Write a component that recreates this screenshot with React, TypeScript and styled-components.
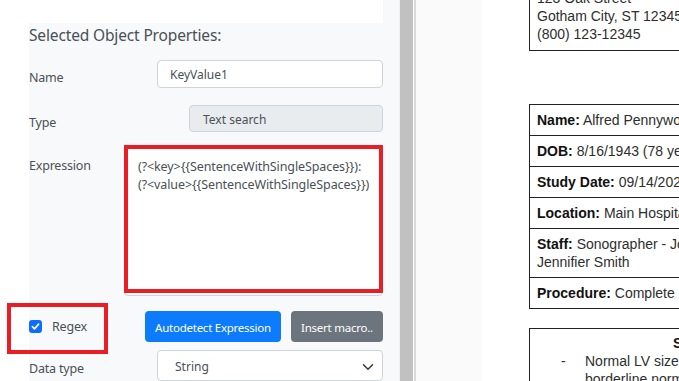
import React from "react"
import styled, { createGlobalStyle } from "styled-components"

const Global = createGlobalStyle`
  html, body {
    margin: 0;
    padding: 0;
    background: #fff;
  }
  * {
    box-sizing: border-box;
  }
`

const S = {
  Screen: styled.div`
    width: 679px;
    height: 381px;
    display: flex;
    overflow: hidden;
    font-family: "Noto Sans", "Open Sans", sans-serif;
  `,
  Left: styled.div`
    width: 400px;
    flex: none;
    padding-left: 29px;
    background: #fff;
    display: flex;
  `,
  Panel: styled.div`
    flex: 1;
    background: #f8f9fa;
    padding-right: 16px;
    border-right: 1px solid #eef0f2;
    display: flex;
    flex-direction: column;
  `,
  TopCard: styled.div`
    height: 24px;
    background: #fff;
  `,
  Heading: styled.div`
    height: 24px;
    line-height: 24px;
    font-size: 15.5px;
    color: #495057;
    letter-spacing: -0.15px;
  `,
  Row: styled.div<{ $mt: number }>`
    display: grid;
    grid-template-columns: 95px 1fr;
    align-items: start;
    margin-top: ${(p) => p.$mt}px;
  `,
  Label: styled.div<{ $pt: number }>`
    font-size: 12.5px;
    letter-spacing: -0.2px;
    color: #495057;
    padding-top: ${(p) => p.$pt}px;
    line-height: 18px;
  `,
  Input: styled.div<{ $indent: number; $disabled?: boolean }>`
    margin-left: ${(p) => p.$indent}px;
    height: ${(p) => (p.$disabled ? 27 : 28)}px;
    border: 1px solid #ced4da;
    border-radius: 4px;
    background: ${(p) => (p.$disabled ? "#e9ecef" : "#fff")};
    padding-left: ${(p) => (p.$disabled ? 13 : 12)}px;
    padding-top: 1px;
    display: flex;
    align-items: center;
    font-size: 12px;
    color: #495057;
  `,
  Select: styled.div`
    margin-left: 33px;
    height: 31px;
    border: 1px solid #ced4da;
    border-radius: 4px;
    background: #fff;
    padding: 2px 8px 0 17px;
    display: flex;
    align-items: center;
    justify-content: space-between;
    font-size: 12px;
    color: #495057;
  `,
  AreaWrap: styled.div`
    position: relative;
    height: 151px;
    border: 1px solid #ced4da;
    border-radius: 4px;
    background: #fff;
    padding: 12px 10px 0 13px;
    font-size: 12.5px;
    line-height: 18px;
    color: #495057;
    white-space: pre;
    letter-spacing: -0.1px;
  `,
  Grip: styled.svg`
    position: absolute;
    right: 1px;
    bottom: 1px;
  `,
  Annotation: styled.div<{ $t: number; $l: number; $w: number; $h: number }>`
    position: absolute;
    top: ${(p) => p.$t}px;
    left: ${(p) => p.$l}px;
    width: ${(p) => p.$w}px;
    height: ${(p) => p.$h}px;
    border: 4.5px solid #ec1c24;
    pointer-events: none;
  `,
  Actions: styled.div`
    display: flex;
    align-items: center;
    margin-top: 15px;
  `,
  Check: styled.div`
    position: relative;
    width: 116px;
    display: flex;
    align-items: center;
    gap: 10px;
    font-size: 12.5px;
    letter-spacing: -0.2px;
    color: #495057;
  `,
  Box: styled.span`
    width: 13px;
    height: 13px;
    border-radius: 3px;
    background: #0d6efd;
    display: flex;
    align-items: center;
    justify-content: center;
  `,
  Button: styled.button<{ $variant: "primary" | "secondary"; $w: number }>`
    width: ${(p) => p.$w}px;
    height: 31px;
    border: none;
    border-radius: 4px;
    background: ${(p) => (p.$variant === "primary" ? "#0d7bfd" : "#6c757d")};
    color: #fff;
    font-family: inherit;
    font-size: 11.5px;
    letter-spacing: -0.25px;
    padding: 1px 0 0;
    & + & {
      margin-left: 10px;
    }
  `,
  Splitter: styled.div`
    width: 14px;
    flex: none;
    background: #c1c1c1;
    border-right: 1px solid #fff;
  `,
  Viewer: styled.div`
    flex: 1;
    display: flex;
    background: #fafafa;
    border-left: 2px solid #dadada;
    padding-left: 66px;
    overflow: hidden;
  `,
  Page: styled.div`
    flex: 1;
    background: #fff;
    padding-left: 47px;
    font-family: "Liberation Sans", Arial, sans-serif;
    font-size: 14px;
    color: #2e2e2e;
    overflow: hidden;
  `,
  Scroll: styled.div`
    width: 352px;
    margin-top: -19px;
  `,
  Block: styled.div<{ $mt: number }>`
    border: 1.5px solid #222;
    margin-top: ${(p) => p.$mt}px;
  `,
  Address: styled.div`
    padding: 7px 7px 7px;
    line-height: 18px;
  `,
  Cell: styled.div`
    padding: 6px 7px;
    line-height: 18px;
    & + & {
      border-top: 1px solid #222;
    }
    b {
      font-weight: bold;
      color: #111;
    }
  `,
  Title: styled.div`
    text-align: center;
    font-weight: bold;
    color: #111;
    line-height: 18px;
    padding-top: 5px;
  `,
  Item: styled.div`
    display: flex;
    line-height: 18px;
    padding-left: 31px;
    span:first-child {
      width: 24px;
      flex: none;
    }
  `,
}

const Chevron = () => (
  <svg width="12" height="12" viewBox="0 0 16 16">
    <path d="M2 5l6 6 6-6" fill="none" stroke="#343a40" strokeWidth="2" strokeLinecap="round" strokeLinejoin="round" />
  </svg>
)

const App: React.FC = () => {
  return (
    <S.Screen>
      <Global />
      <S.Left>
        <S.Panel>
          <S.TopCard />
          <S.Heading>Selected Object Properties:</S.Heading>
          <S.Row $mt={13}>
            <S.Label $pt={9}>Name</S.Label>
            <S.Input $indent={33}>KeyValue1</S.Input>
          </S.Row>
          <S.Row $mt={17}>
            <S.Label $pt={9}>Type</S.Label>
            <S.Input $indent={65} $disabled>
              Text search
            </S.Input>
          </S.Row>
          <S.Row $mt={13}>
            <S.Label $pt={12}>Expression</S.Label>
            <S.AreaWrap>
              {"(?<key>{{SentenceWithSingleSpaces}}):\n(?<value>{{SentenceWithSingleSpaces}})"}
              <S.Grip width="6" height="6" viewBox="0 0 6 6">
                <path d="M5 1L1 5M5 3.5L3.5 5" stroke="#999" strokeWidth="0.8" />
              </S.Grip>
              <S.Annotation $t={-1} $l={-1} $w={259} $h={148} />
            </S.AreaWrap>
          </S.Row>
          <S.Actions>
            <S.Check>
              <S.Box>
                <svg width="9" height="9" viewBox="0 0 10 10">
                  <path d="M1.5 5.2l2.4 2.4 4.6-5.2" fill="none" stroke="#fff" strokeWidth="1.8" strokeLinecap="round" strokeLinejoin="round" />
                </svg>
              </S.Box>
              Regex
              <S.Annotation $t={-15} $l={-22} $w={101} $h={51} />
            </S.Check>
            <S.Button $variant="primary" $w={136}>
              Autodetect Expression
            </S.Button>
            <S.Button $variant="secondary" $w={92}>
              Insert macro..
            </S.Button>
          </S.Actions>
          <S.Row $mt={8}>
            <S.Label $pt={10}>Data type</S.Label>
            <S.Select>
              String
              <Chevron />
            </S.Select>
          </S.Row>
        </S.Panel>
      </S.Left>
      <S.Splitter />
      <S.Viewer>
        <S.Page>
          <S.Scroll>
            <S.Block $mt={0}>
              <S.Address>
                123 Oak Street
                <br />
                Gotham City, ST 12345
                <br />
                (800) 123-12345
              </S.Address>
            </S.Block>
            <S.Block $mt={53}>
              <S.Cell>
                <b>Name:</b> Alfred Pennyworth
              </S.Cell>
              <S.Cell>
                <b>DOB:</b> 8/16/1943 (78 years)
              </S.Cell>
              <S.Cell>
                <b>Study Date:</b> 09/14/2021
              </S.Cell>
              <S.Cell>
                <b>Location:</b> Main Hospital
              </S.Cell>
              <S.Cell>
                <b>Staff:</b> Sonographer - John Doe, Reader - Dr.
                <br />
                Jennifier Smith
              </S.Cell>
              <S.Cell>
                <b>Procedure:</b> Complete Echocardiogram
              </S.Cell>
            </S.Block>
            <S.Block $mt={19}>
              <S.Title>Summary</S.Title>
              <S.Item>
                <span>-</span>
                <span>Normal LV size and wall thickness with borderline normal systolic function.</span>
              </S.Item>
            </S.Block>
          </S.Scroll>
        </S.Page>
      </S.Viewer>
    </S.Screen>
  )
}

export default App
